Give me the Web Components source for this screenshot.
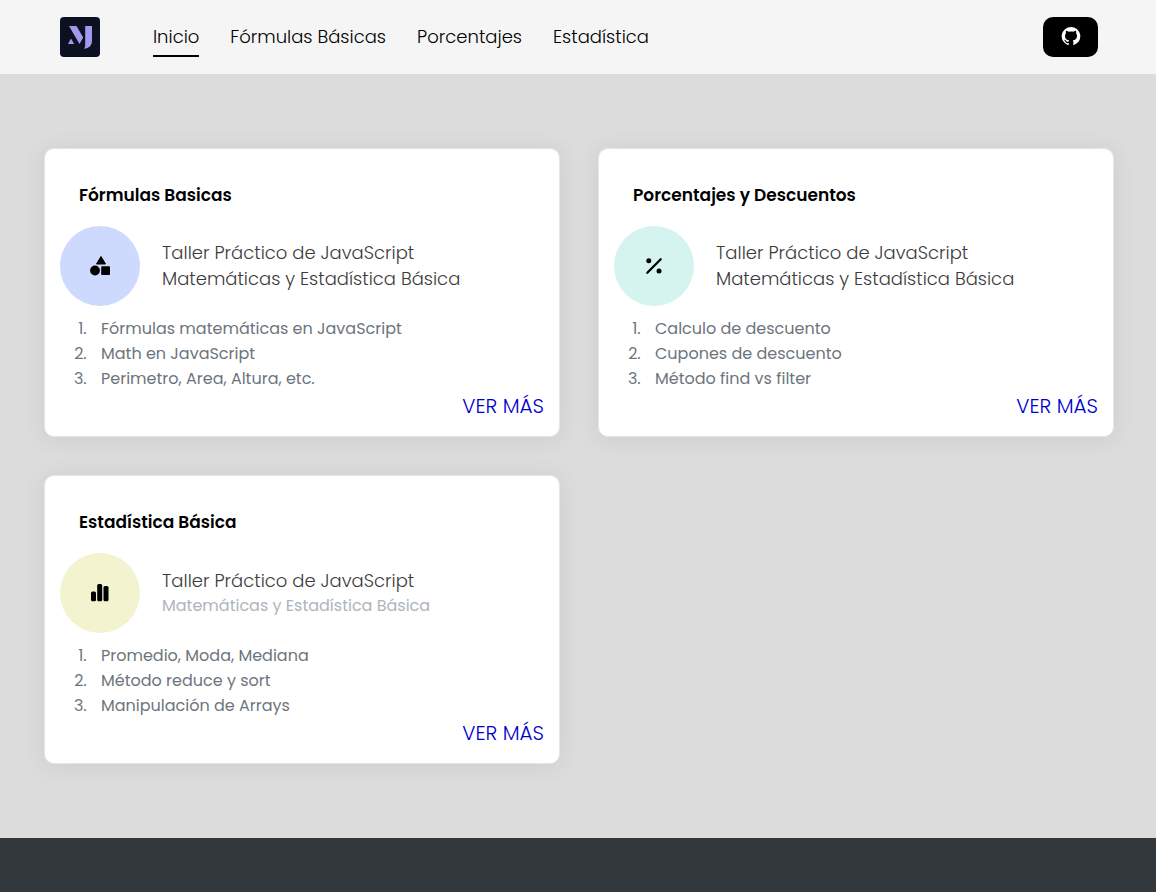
<!DOCTYPE html>
<html lang="es">
<head>
<meta charset="utf-8">
<meta name="viewport" content="width=device-width, initial-scale=1">
<title>Taller Práctico de JavaScript</title>
<style>
body { margin: 0; min-height: 100vh; display: flex; flex-direction: column; background: #dcdcdc; color: #000; font-family: Poppins, Inter, "Open Sans", sans-serif; }
site-footer { flex: 1; }
</style>
</head>
<body>
<site-header></site-header>
<card-grid>
  <topic-card tint="#cddafd" href="#formulas">
    <span slot="title">Fórmulas Basicas</span>
    <svg slot="icon" width="20" height="20" viewBox="0 0 20 20" aria-hidden="true"><path d="M11 0.500 15.500 8H6.500z" stroke="#000" stroke-linejoin="round"/><circle cx="5" cy="14.500" r="4.900"/><rect x="11.200" y="10.300" width="8.800" height="8.700" rx=".8"/></svg>
    <span slot="lead">Taller Práctico de JavaScript</span>
    <span slot="sub">Matemáticas y Estadística Básica</span>
    <li>Fórmulas matemáticas en JavaScript</li><li>Math en JavaScript</li><li>Perimetro, Area, Altura, etc.</li>
  </topic-card>
  <topic-card tint="#d5f3ef" href="#porcentajes">
    <span slot="title">Porcentajes y Descuentos</span>
    <svg slot="icon" width="20" height="20" viewBox="0 0 20 20" aria-hidden="true"><circle cx="4.800" cy="4.800" r="2.500"/><circle cx="15" cy="15" r="2.500"/><path d="M3.300 16.700 16.700 3.300" stroke="#000" stroke-width="2.300" stroke-linecap="round"/></svg>
    <span slot="lead">Taller Práctico de JavaScript</span>
    <span slot="sub">Matemáticas y Estadística Básica</span>
    <li>Calculo de descuento</li><li>Cupones de descuento</li><li>Método find vs filter</li>
  </topic-card>
  <topic-card muted tint="#f3f3cf" href="#estadistica">
    <span slot="title">Estadística Básica</span>
    <svg slot="icon" width="20" height="20" viewBox="0 0 20 20" aria-hidden="true"><rect x="1" y="8.500" width="5" height="9.800" rx="1.500"/><rect x="7.200" y="1" width="5" height="17.300" rx="1.500"/><rect x="13.500" y="3" width="5" height="15.300" rx="1.500"/></svg>
    <span slot="lead">Taller Práctico de JavaScript</span>
    <span slot="sub">Matemáticas y Estadística Básica</span>
    <li>Promedio, Moda, Mediana</li><li>Método reduce y sort</li><li>Manipulación de Arrays</li>
  </topic-card>
</card-grid>
<site-footer></site-footer>
<script>
class BaseElement extends HTMLElement {
  constructor() {
    super();
    this.attachShadow({ mode: "open" }).innerHTML = this.constructor.markup;
  }
}

customElements.define("site-header", class extends BaseElement {
  static markup = `
    <style>
      :host { display: block; background: #f5f5f5; }
      header { display: flex; align-items: center; padding: 17px 58px 17px 60px; }
      .logo, .logo svg { display: block; }
      nav { display: flex; gap: 31px; margin-left: 53px; flex: 1; padding-top: 2px; }
      nav a { color: #000; text-decoration: none; font-size: 18px; font-weight: 300; line-height: 36px; border-bottom: 2px solid transparent; }
      nav a[aria-current] { border-color: #000; }
      button { display: grid; place-items: center; width: 55px; height: 40px; padding: 0 0 2px; border: 0; border-radius: 10px; background: #000; color: #fff; }
    </style>
    <header>
      <a class="logo" href="#" aria-label="MJ">
        <svg width="40" height="40" viewBox="0 0 40 40" aria-hidden="true"><rect width="40" height="40" rx="4" fill="#0b1120"/><path fill="#a397ee" d="M9 9h7.500L23.200 20.500 19.500 27zM11 21.500 14.200 27H8zM25.200 9H32v15c0 4.500-3 7.500-8 7.700 1-1.200 1.200-2.400 1.200-4.200z"/></svg>
      </a>
      <nav>
        <a href="#" aria-current="page">Inicio</a>
        <a href="#formulas">Fórmulas Básicas</a>
        <a href="#porcentajes">Porcentajes</a>
        <a href="#estadistica">Estadística</a>
      </nav>
      <button type="button" aria-label="GitHub">
        <svg width="20" height="20" viewBox="0 0 16 16" fill="currentColor" aria-hidden="true"><path d="M8 .700a7.500 7.500 0 0 0-2.370 14.600c.370.070.510-.160.510-.360v-1.300c-2.080.450-2.520-1-2.520-1-.340-.870-.830-1.100-.830-1.100-.680-.460.050-.450.050-.450.750.050 1.150.770 1.150.770.670 1.150 1.750.820 2.180.630.070-.490.260-.820.480-1-1.660-.190-3.410-.830-3.410-3.700 0-.820.290-1.490.770-2.010-.080-.190-.330-.950.070-1.990 0 0 .630-.200 2.060.770A7.200 7.200 0 0 1 8 4.300c.640 0 1.280.090 1.880.250 1.430-.970 2.060-.770 2.060-.770.400 1.040.150 1.800.070 1.990.480.520.770 1.190.770 2.010 0 2.880-1.750 3.510-3.420 3.700.270.230.510.690.510 1.390v2.060c0 .200.140.430.520.360A7.500 7.500 0 0 0 8 .700z"/></svg>
      </button>
    </header>`;
});

customElements.define("card-grid", class extends BaseElement {
  static markup = `
    <style>
      :host { display: block; }
      main { display: grid; grid-template-columns: repeat(auto-fit, minmax(400px, 1fr)); gap: 38px; padding: 74px 42px 74px 44px; }
    </style>
    <main><slot></slot></main>`;
});

customElements.define("topic-card", class extends BaseElement {
  static markup = `
    <style>
      :host { display: block; background: #fff; border: 1px solid #e4e6ea; border-radius: 10px; box-shadow: 0 2px 20px rgba(90, 95, 120, .12); }
      article { display: flex; flex-direction: column; padding: 34px 15px 15px; }
      h2 { margin: 0 19px 19px; font-size: 17px; font-weight: 600; line-height: 24px; }
      .intro { display: flex; align-items: center; gap: 22px; }
      .badge { flex: none; display: grid; place-items: center; width: 80px; height: 80px; border-radius: 50%; }
      p { margin: 0; color: #3b3b3b; font-size: 18px; font-weight: 300; line-height: 26px; }
      :host([muted]) p + p { color: #adb5bd; font-size: 16px; font-weight: 400; line-height: 24px; }
      ol { margin: 10px 0 0; padding: 0 0 0 31px; color: #6c757d; font-size: 16px; line-height: 25px; }
      ::slotted(li) { padding-left: 10px; }
      .more { align-self: flex-end; color: #0000cd; text-decoration: none; font-size: 20px; font-weight: 300; line-height: 30px; }
    </style>
    <article>
      <h2><slot name="title"></slot></h2>
      <div class="intro">
        <div class="badge"><slot name="icon"></slot></div>
        <div><p><slot name="lead"></slot></p><p><slot name="sub"></slot></p></div>
      </div>
      <ol><slot></slot></ol>
      <a class="more">VER MÁS</a>
    </article>`;
  connectedCallback() {
    this.shadowRoot.querySelector(".badge").style.background = this.getAttribute("tint");
    this.shadowRoot.querySelector(".more").href = this.getAttribute("href");
  }
});

customElements.define("site-footer", class extends BaseElement {
  static markup = `
    <style>
      :host { display: flex; background: #33383c; }
      footer { flex: 1; min-height: 54px; }
    </style>
    <footer></footer>`;
});
</script>
</body>
</html>
